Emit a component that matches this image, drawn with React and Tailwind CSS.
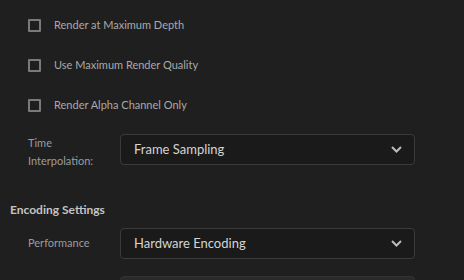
import React from 'react';

const Chevron = () => (
  <svg width="11" height="7" viewBox="0 0 11 7" className="text-[#bcbcbc]">
    <path d="M1 1l4.5 4.5L10 1" fill="none" stroke="currentColor" strokeWidth="2" />
  </svg>
);

const Check = ({ label }) => (
  <div className="flex h-10 items-center">
    <div className="w-[13px] h-[13px] border-2 border-[#7a7a7a] rounded-[1px]" />
    <span className="ml-[13px] text-[11px] text-[#a9a9a9]">{label}</span>
  </div>
);

const Select = ({ value, disabled }) => (
  <div
    className={
      disabled
        ? 'w-[295px] h-[31px] rounded-[4px] border border-[#333] bg-[#2a2a2a]'
        : 'w-[295px] h-[31px] rounded-[4px] border border-[#3b3b3b] bg-[#1a1a1a] flex items-center justify-between pl-[13px] pr-[12px]'
    }
  >
    {!disabled && (
      <>
        <span className="text-[13px] text-[#d4d4d4]">{value}</span>
        <Chevron />
      </>
    )}
  </div>
);

export default function App() {
  return (
    <div className="w-[464px] h-[280px] overflow-hidden bg-[#1f1f1f]" style={{ fontFamily: 'Lato, "Noto Sans", sans-serif' }}>
      {/* render options */}
      <div className="pl-[28px] pt-[5px]">
        <Check label="Render at Maximum Depth" />
        <Check label="Use Maximum Render Quality" />
        <Check label="Render Alpha Channel Only" />
      </div>

      <div className="flex mt-[9px] pl-[28px]">
        <div className="w-[92px] text-[11px] leading-[18px] text-[#9c9c9c]">
          Time<br />Interpolation:
        </div>
        <Select value="Frame Sampling" />
      </div>

      {/* encoding */}
      <div className="pl-[10px] mt-[31px] text-[12px] leading-[18px] font-bold text-[#c4c4c4]">Encoding Settings</div>

      <div className="flex items-center mt-[9px] pl-[28px]">
        <div className="w-[92px] text-[11px] text-[#9c9c9c]">Performance</div>
        <Select value="Hardware Encoding" />
      </div>

      <div className="flex mt-[17px] pl-[120px]">
        <Select disabled />
      </div>
    </div>
  );
}
